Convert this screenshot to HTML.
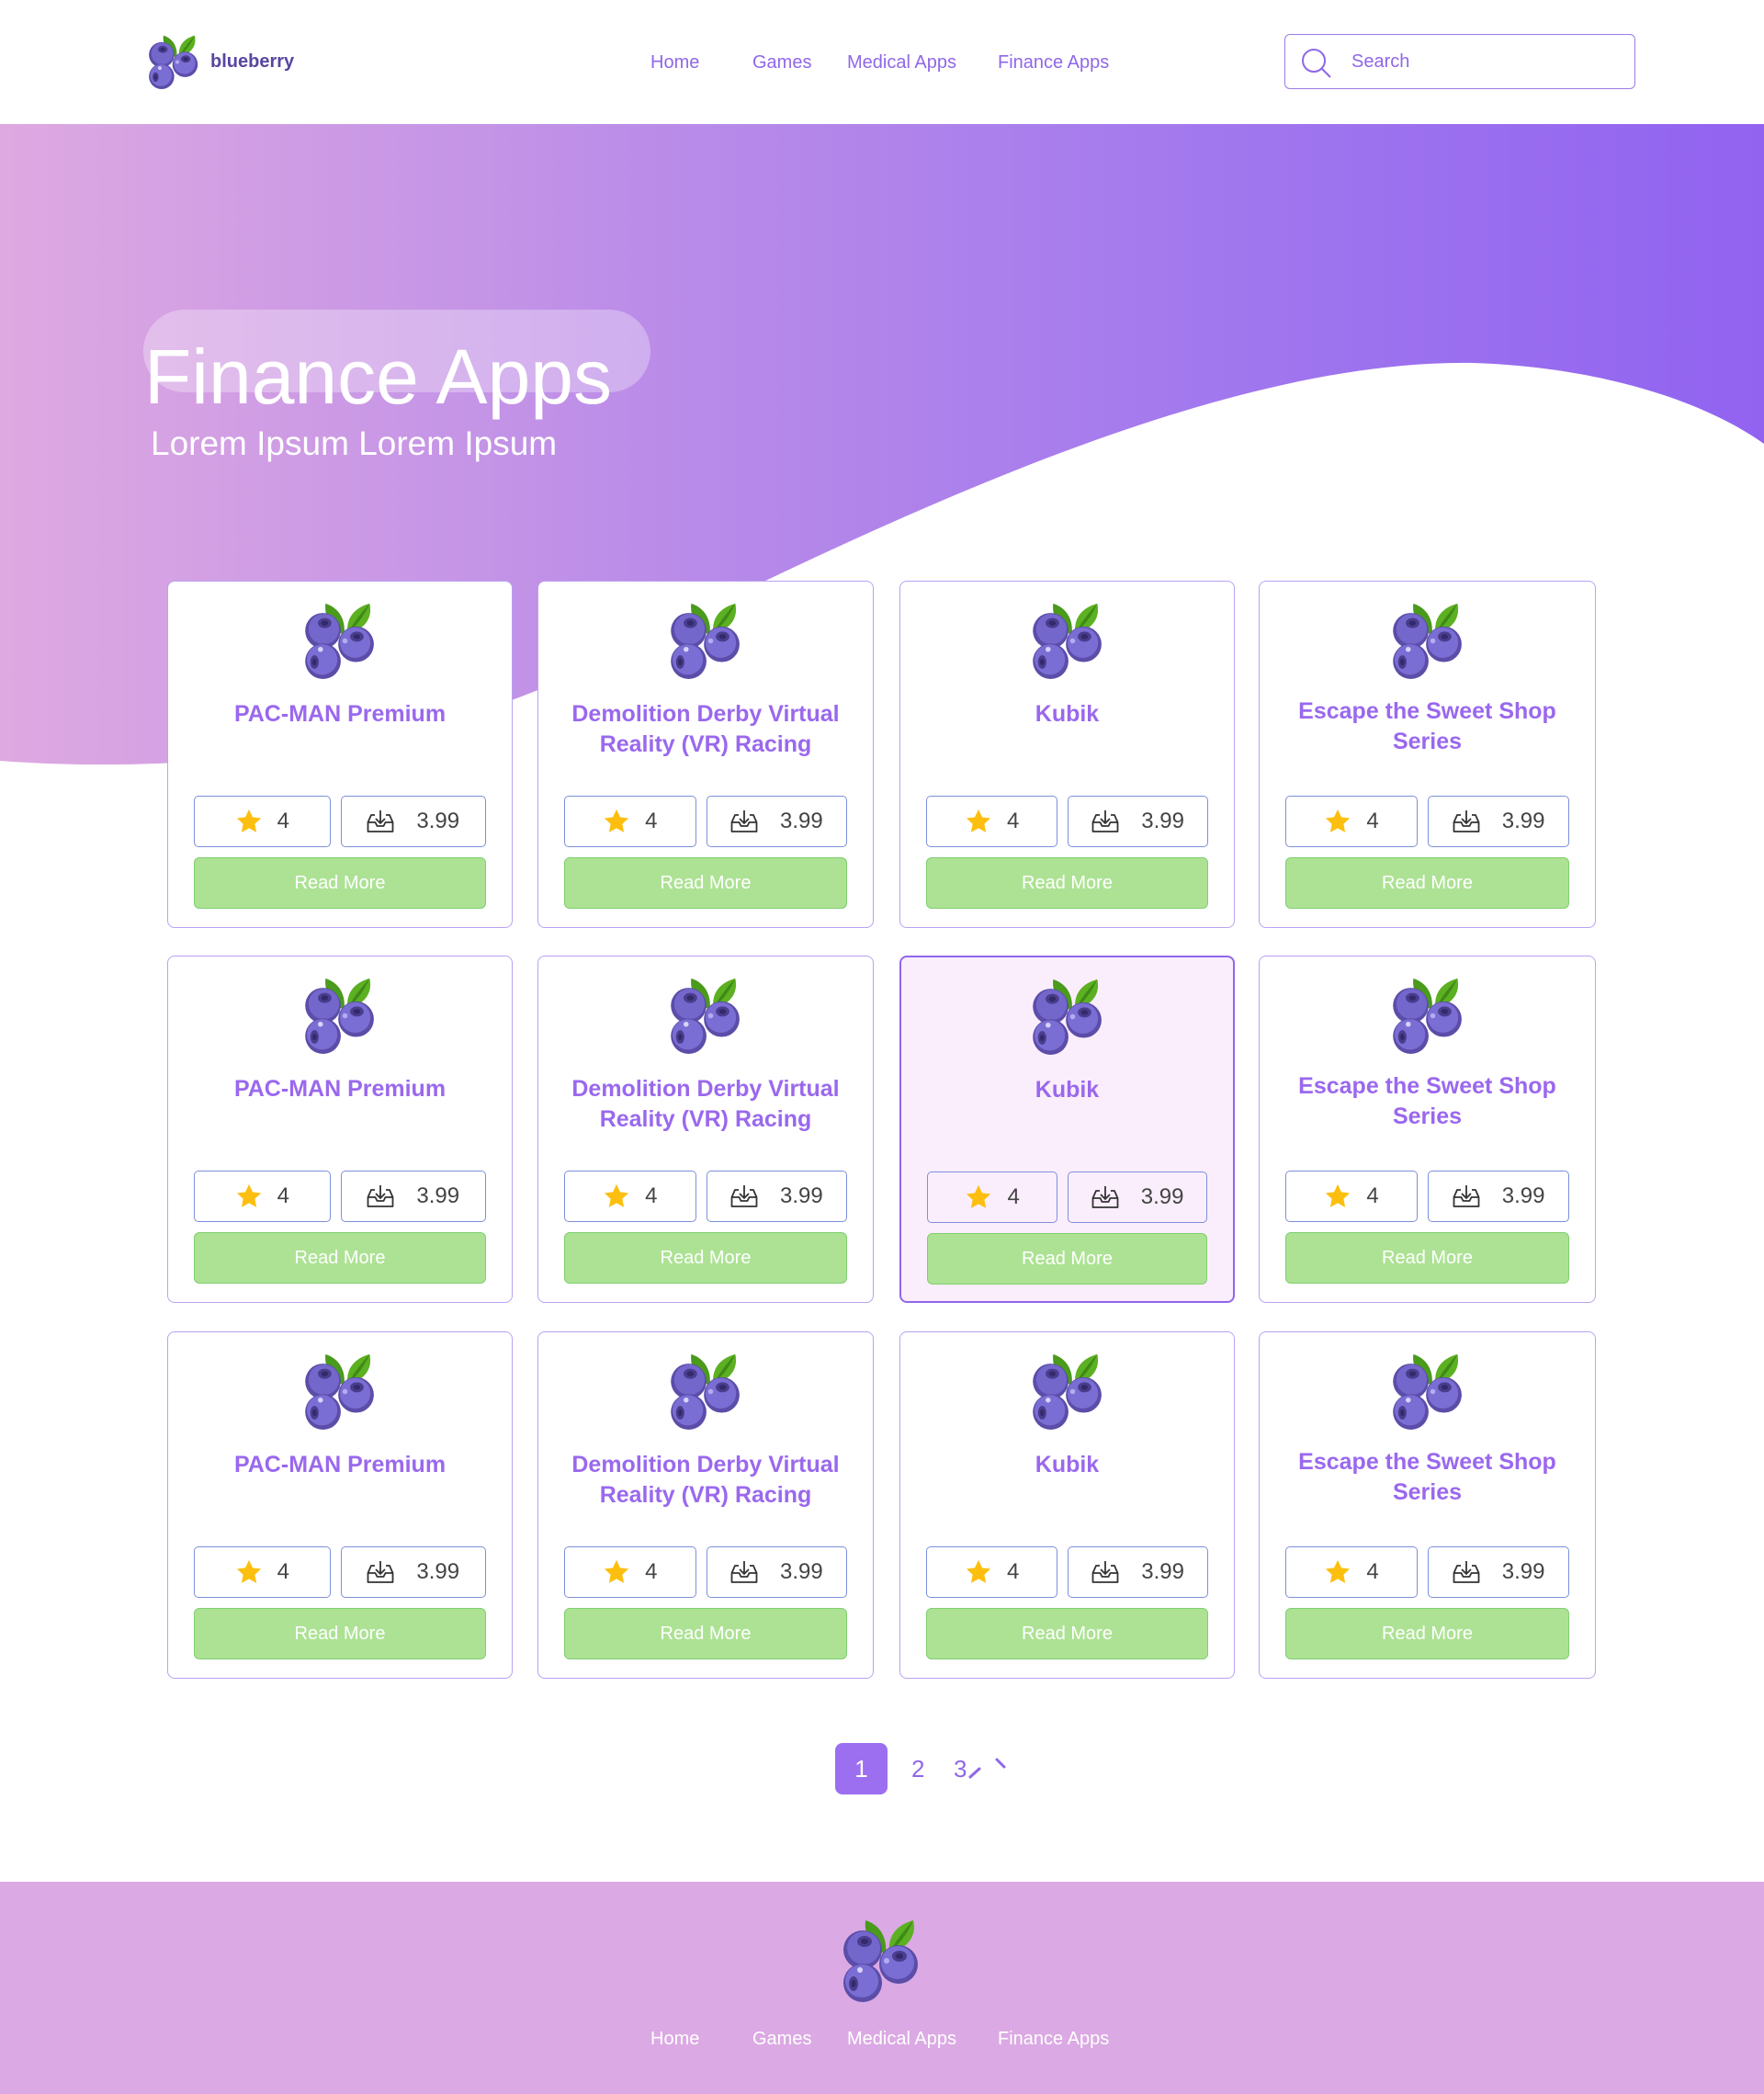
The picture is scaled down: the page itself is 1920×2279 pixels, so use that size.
<!DOCTYPE html>
<html><head><meta charset="utf-8">
<style>
*{margin:0;padding:0;box-sizing:border-box}
body{width:1920px;height:2279px;position:relative;background:#fff;font-family:"Liberation Sans",Arial,sans-serif;overflow:hidden}
.abs{position:absolute}
.nav a{position:absolute;top:57px;font-size:20px;color:#9067e8;text-decoration:none;white-space:nowrap}
.card{position:absolute;height:378px;background:#fff;border:1.5px solid #b9a2f3;border-radius:8px}
.card.hl{background:#fbeefc;border:2.5px solid #9066ee}
.card svg.b{position:absolute;left:50%;top:23px;margin-left:-38px;width:76px;height:83px}
.ttl{position:absolute;left:10px;right:10px;top:128px;text-align:center;color:#9a68ee;font-size:25px;font-weight:bold;line-height:33px}
.stats{position:absolute;left:28px;right:28px;top:233px;height:56px;display:flex;gap:11px}
.st{border:1.5px solid #7d8fdc;border-radius:5px;display:flex;align-items:center;justify-content:center;font-size:24px;color:#444;background:transparent}
.st1{flex:148}.st2{flex:158}
.btn{position:absolute;left:28px;right:28px;top:300px;height:56px;background:#ade294;border:1.5px solid #7fcf70;border-radius:6px;color:#fff;font-size:20px;display:flex;align-items:center;justify-content:center}
</style></head><body>
<svg width="0" height="0" style="position:absolute">
<defs>
<symbol id="berry" viewBox="0 0 82 90">
<path d="M24 1 C40 6 48 20 46 38 C32 32 22 18 24 1Z" fill="#4a9a1c"/>
<path d="M76 1 C80 18 70 32 50 36 C48 18 58 6 76 1Z" fill="#5cb021"/>
<path d="M76 1 C70 15 60 28 50 36 C58 22 66 12 76 1Z" fill="#3e8a16"/>
<circle cx="21" cy="33" r="21" fill="#5b4da8"/><circle cx="22" cy="31" r="18" fill="#7467cc"/>
<ellipse cx="23" cy="24" rx="8" ry="6" fill="#4a3d8e"/><ellipse cx="23" cy="24" rx="4" ry="3" fill="#332a6a"/>
<circle cx="60" cy="49" r="21" fill="#5b4da8"/><circle cx="59" cy="47" r="18" fill="#7a6ed4"/>
<ellipse cx="61" cy="40" rx="8" ry="6" fill="#4a3d8e"/><ellipse cx="61" cy="40" rx="4" ry="3" fill="#332a6a"/>
<circle cx="47" cy="45" r="3" fill="#b4acf0"/>
<circle cx="21" cy="69" r="21" fill="#5b4da8"/><circle cx="20" cy="67" r="18" fill="#7a6ed4"/>
<ellipse cx="11" cy="70" rx="5" ry="8" fill="#4a3d8e"/><ellipse cx="11" cy="70" rx="2.5" ry="4" fill="#332a6a"/>
<circle cx="18" cy="55" r="3" fill="#d8d3fa"/>
</symbol>
<symbol id="star" viewBox="0 0 24 24"><path d="M12 1.5l3.2 6.8 7.3.9-5.4 5 1.4 7.3L12 17.9l-6.5 3.6 1.4-7.3-5.4-5 7.3-.9z" fill="#fdbf0f"/></symbol>
<symbol id="dl" viewBox="0 0 30 26"><path d="M9 6H5L1.5 14v10h27V14L25 6h-4M1.5 14h8l2 4h7l2-4h8M15 1v14M10 10l5 5 5-5" fill="none" stroke="#333" stroke-width="1.8" stroke-linejoin="round"/></symbol>
</defs></svg>

<svg class="abs" style="left:162px;top:38px;width:54px;height:59px"><use href="#berry"/></svg>
<div class="abs" style="left:229px;top:56px;font-size:20px;font-weight:bold;color:#5a45a0">blueberry</div>
<div class="nav"><a style="left:708px">Home</a><a style="left:819px">Games</a><a style="left:922px">Medical Apps</a><a style="left:1086px">Finance Apps</a></div>
<div class="abs" style="left:1398px;top:37px;width:382px;height:60px;border:1.5px solid #9b7be6;border-radius:6px">
<svg class="abs" style="left:16px;top:13px" width="36" height="36" viewBox="0 0 36 36"><circle cx="15" cy="15" r="12" fill="none" stroke="#8e67e8" stroke-width="2"/><path d="M24 24l9 9" stroke="#8e67e8" stroke-width="2"/></svg>
<div class="abs" style="left:72px;top:18px;font-size:20px;color:#9067e8">Search</div></div>

<div class="abs" style="left:0;top:135px;width:1920px;height:770px;background:linear-gradient(90deg,#dea9e1 0%,#b88ae9 40%,#a177ee 70%,#9163f0 100%)"></div>
<svg class="abs" style="left:0;top:0" width="1920" height="910"><path d="M0 828 C180 842 420 822 600 745 C900 600 1300 390 1604 395 C1750 400 1860 440 1920 483 L1920 910 L0 910Z" fill="#fff"/></svg>
<div class="abs" style="left:156px;top:337px;width:552px;height:90px;border-radius:45px;background:rgba(255,255,255,0.3)"></div>
<div class="abs" style="left:157px;top:360px;font-size:84px;color:#fff;line-height:100px">Finance Apps</div>
<div class="abs" style="left:164px;top:459px;font-size:37px;color:#fff;line-height:48px">Lorem Ipsum Lorem Ipsum</div>

<div id="cards"></div>
<script>
var cols=[[182,376],[585,366],[979,365],[1370,367]];
var rows=[632,1040,1449];
var titles=[["PAC-MAN Premium",128],["Demolition Derby Virtual<br>Reality (VR) Racing",128],["Kubik",128],["Escape the Sweet Shop<br>Series",125]];
var h="";
rows.forEach(function(t,ri){cols.forEach(function(c,ci){
var hl=(ri==1&&ci==2)?" hl":"";
h+='<div class="card'+hl+'" style="left:'+c[0]+'px;top:'+t+'px;width:'+c[1]+'px"><svg class="b"><use href="#berry"/></svg><div class="ttl" style="top:'+titles[ci][1]+'px">'+titles[ci][0]+'</div><div class="stats"><div class="st st1"><svg width="30" height="30" style="margin-right:16px"><use href="#star"/></svg>4</div><div class="st st2"><svg width="30" height="26" style="margin-right:24px"><use href="#dl"/></svg>3.99</div></div><div class="btn">Read More</div></div>';
});});
document.getElementById("cards").innerHTML=h;
</script>

<div class="abs" style="left:909px;top:1897px;width:57px;height:56px;background:#9b6ff0;border-radius:8px;color:#fff;font-size:26px;display:flex;align-items:center;justify-content:center">1</div>
<div class="abs" style="left:992px;top:1910px;font-size:26px;color:#9067e8">2</div>
<div class="abs" style="left:1038px;top:1910px;font-size:26px;color:#9067e8">3</div>
<svg class="abs" style="left:1052px;top:1910px" width="50" height="40"><path d="M4 24l10-9M33 5l8 8" stroke="#9067e8" stroke-width="3" stroke-linecap="round"/></svg>

<div class="abs" style="left:0;top:2048px;width:1920px;height:231px;background:#dba9e3"></div>
<svg class="abs" style="left:918px;top:2089px;width:82px;height:90px"><use href="#berry"/></svg>
<div class="nav"><a style="left:708px;top:2208px;color:#fff">Home</a><a style="left:819px;top:2208px;color:#fff">Games</a><a style="left:922px;top:2208px;color:#fff">Medical Apps</a><a style="left:1086px;top:2208px;color:#fff">Finance Apps</a></div>
</body></html>
